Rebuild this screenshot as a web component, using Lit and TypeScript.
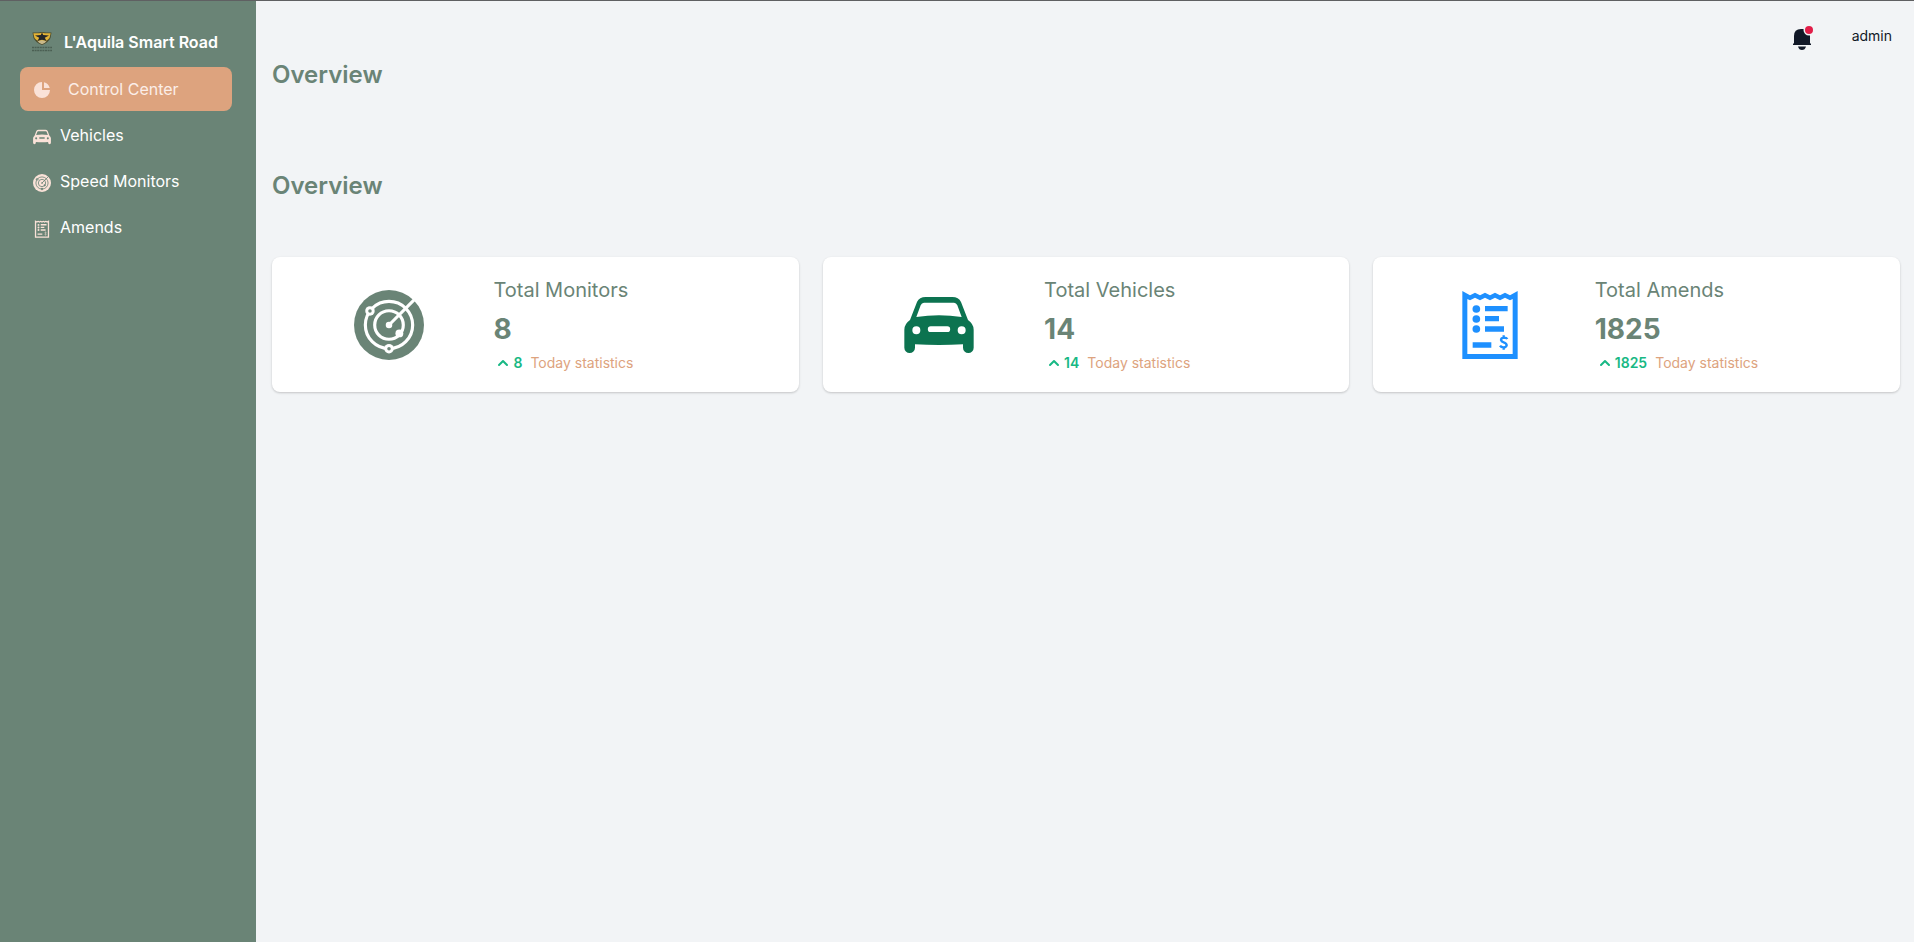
import { LitElement, html, svg, css } from "lit";
import { customElement, property } from "lit/decorators.js";

type IconName = "pie" | "car" | "radar" | "receipt";

const icons = {
  pie: svg`<svg viewBox="0 0 20 20" fill="currentColor" aria-hidden="true">
    <path d="M2 10a8 8 0 018-8v8h8a8 8 0 11-16 0z"/>
    <path d="M12 2.252A8.014 8.014 0 0117.748 8H12V2.252z"/></svg>`,
  car: svg`<svg viewBox="42 26 210 210" fill="currentColor" aria-hidden="true">
    <path fill-rule="evenodd" d="M107 47H187Q206 47 213 62L234 116Q251 128 251 145V199A16 16 0 0 1 219 199V189Q147 193 75 189V199A16 16 0 0 1 43 199V145Q43 128 60 116L81 62Q88 47 107 47ZM102 64Q95 64 92 72L79 107Q147 97 215 107L202 72Q199 64 192 64ZM79 135A12 12 0 1 0 79 159A12 12 0 1 0 79 135ZM215 135A12 12 0 1 0 215 159A12 12 0 1 0 215 135ZM122 135A8.500 8.500 0 0 0 122 152H172A8.500 8.500 0 0 0 172 135Z"/></svg>`,
  radar: svg`<svg viewBox="-35.500 -35.500 71 71" aria-hidden="true">
    <mask id="radar-cut" maskUnits="userSpaceOnUse" x="-36" y="-36" width="72" height="72">
      <circle r="35.500" fill="#fff"/>
      <g fill="none" stroke="#000" stroke-width="3.200">
        <circle r="24"/><circle r="14.500"/><path d="M0 0L28 -28"/>
      </g>
      <circle r="3.300"/><circle cx="10.500" cy="8.500" r="4"/>
      <circle cx="-19.300" cy="-14.300" r="4.800"/><circle cy="24" r="4.800"/>
      <circle cx="-19.300" cy="-14.300" r="1.800" fill="#fff"/><circle cy="24" r="1.800" fill="#fff"/>
    </mask>
    <rect x="-36" y="-36" width="72" height="72" fill="currentColor" mask="url(#radar-cut)"/></svg>`,
  receipt: svg`<svg viewBox="45 30 210 210" fill="currentColor" aria-hidden="true">
    <path fill-rule="evenodd" d="M67 33L90 46L105 38L120 46L135 38L150 46L165 38L180 46L195 38L210 46L233 33V237H67ZM82 57V222H218V57L210 61L195 53L180 61L165 53L150 61L135 53L120 61L105 53L90 61Z"/>
    <circle cx="109" cy="87" r="11.500"/><circle cx="109" cy="117" r="11.500"/><circle cx="109" cy="147" r="11.500"/>
    <path d="M135 78h68v16h-68zM135 108h42v16h-42zM135 139h57v16h-57zM98 187h56v16H98z"/>
    <path d="M202 177Q200 173 191 173Q183 174 183 180Q184 185 191 187Q200 190 200 196Q198 202 191 202Q183 202 180 197M191 166V174M191 201V209" fill="none" stroke="currentColor" stroke-width="7"/></svg>`,
};

const crest = svg`<svg viewBox="0 0 20 20" aria-hidden="true">
  <path d="M0.500 0.500H6L10 0L14 0.500H19.500L18.500 6Q16 11 10 13Q4 11 1.500 6Z" fill="#4a4a2c"/>
  <path d="M1.300 1.300H7L10 0.800L13 1.300H18.700L17.500 6Q15 9.500 10 9.500Q5 9.500 2.500 6Z" fill="#e3b437"/>
  <path d="M10 0.500L11.200 3L17 3.600L12.800 5.800L14.500 9L10 7.800L5.500 9L7.200 5.800L3 3.600L8.800 3Z" fill="#24272a"/>
  <path d="M5.500 9.300L10 8.300L14.500 9.300Q13 11.500 10 12.300Q7 11.500 5.500 9.300Z" fill="#c9b98a"/>
  <path d="M0 15.500H20M0 18.500H20" stroke="#4b5f53" stroke-width="1.500" stroke-dasharray="2 .6"/></svg>`;

@customElement("stat-card")
export class StatCard extends LitElement {
  @property() icon: IconName = "car";
  @property() label = "";
  @property() value = "";

  static styles = css`
    :host {
      display: grid;
      grid-template-columns: 5fr 7fr;
      align-items: center;
      padding: 20px 12px;
      background: #fff;
      border-radius: 8px;
      box-shadow: 0 1px 3px rgba(0, 0, 0, 0.1), 0 1px 2px rgba(0, 0, 0, 0.1);
      color: #6a8476;
    }
    .figure { display: flex; justify-content: center; }
    .figure svg { width: 70px; height: 70px; }
    .car { color: #0c7350; }
    .receipt { color: #1e90ff; }
    .label { margin: 0; font-size: 20px; line-height: 26px; font-weight: 400; }
    .value { margin: 9px 0 7px; font-size: 28px; line-height: 35px; font-weight: 700; }
    .today { display: flex; align-items: center; font-size: 14px; line-height: 18px; color: #dda37e; }
    .arrow { width: 20px; height: 20px; margin: -1px 0; color: #18b884; }
    .count { margin-right: 8px; font-weight: 600; color: #18b884; }
  `;

  render() {
    return html`
      <div class="figure ${this.icon}">${icons[this.icon]}</div>
      <div>
        <h3 class="label">${this.label}</h3>
        <div class="value">${this.value}</div>
        <div class="today">
          <svg class="arrow" viewBox="0 0 20 20" fill="currentColor" aria-hidden="true">
            <path fill-rule="evenodd" d="M14.707 12.707a1 1 0 01-1.414 0L10 9.414l-3.293 3.293a1 1 0 01-1.414-1.414l4-4a1 1 0 011.414 0l4 4a1 1 0 010 1.414z" clip-rule="evenodd"/>
          </svg>
          <span class="count">${this.value}</span>
          <span>Today statistics</span>
        </div>
      </div>
    `;
  }
}

@customElement("app-root")
export class AppRoot extends LitElement {
  private links: { icon: IconName; text: string }[] = [
    { icon: "car", text: "Vehicles" },
    { icon: "radar", text: "Speed Monitors" },
    { icon: "receipt", text: "Amends" },
  ];

  private stats: { icon: IconName; label: string; value: string }[] = [
    { icon: "radar", label: "Total Monitors", value: "8" },
    { icon: "car", label: "Total Vehicles", value: "14" },
    { icon: "receipt", label: "Total Amends", value: "1825" },
  ];

  static styles = css`
    :host {
      display: flex;
      box-sizing: border-box;
      min-height: 100vh;
      border-top: 1px solid #5f6062;
      background: #f2f4f6;
      color: #111827;
      font: 16px/24px Inter, "Liberation Sans", sans-serif;
    }
    .sidebar {
      box-sizing: border-box;
      flex: 0 0 256px;
      padding: 18px 24px 16px 20px;
      background: #6a8476;
    }
    .menu { display: flex; flex-direction: column; gap: 2px; }
    .link {
      display: flex;
      align-items: center;
      height: 44px;
      padding: 0 12px;
      gap: 8px;
      border-radius: 8px;
      color: #fff;
      text-decoration: none;
    }
    .link svg { width: 20px; height: 18px; color: #fae2d8; margin-top: 4px; }
    .link.brand { height: 46px; gap: 12px; font-weight: 600; }
    .link.brand svg { height: 20px; margin: 0; }
    .link.active { gap: 16px; background: #dda37e; color: #fbeee8; }
    .link.active svg { height: 20px; margin-top: 2px; }
    .content { flex: 1; min-width: 0; padding: 16px 14px 16px 16px; }
    .topbar { display: flex; justify-content: flex-end; align-items: center; gap: 38px; height: 38px; }
    .topbar button {
      display: flex;
      padding: 0;
      border: 0;
      background: none;
      color: inherit;
      font: inherit;
      font-size: 14px;
    }
    .bell svg { width: 24px; height: 28px; }
    .topbar .user { margin-right: 8px; }
    .title { margin: 0; font-size: 24px; line-height: 32px; font-weight: 600; color: #6a8476; }
    .first { margin: 4px 0 79px; }
    .cards { display: grid; grid-template-columns: repeat(3, 1fr); gap: 24px; margin-top: 55px; }
    @media (max-width: 1100px) {
      .cards { grid-template-columns: 1fr; }
    }
  `;

  render() {
    return html`
      <aside class="sidebar">
        <nav class="menu">
          <a class="link brand" href="#home">${crest}<span>L'Aquila Smart Road</span></a>
          <a class="link active" href="#control" aria-current="page">${icons.pie}<span>Control Center</span></a>
          ${this.links.map((l) => html`<a class="link" href="#${l.icon}">${icons[l.icon]}<span>${l.text}</span></a>`)}
        </nav>
      </aside>
      <main class="content">
        <header class="topbar">
          <button class="bell" type="button" aria-label="Notifications">
            <svg viewBox="0 0 24 28" aria-hidden="true">
              <path d="M4 21V14Q4 7 11 7H13Q20 7 20 14V21L21 22V23H3V22ZM8 24.500H16Q15 28 12 28Q9 28 8 24.500Z" fill="#111827"/>
              <circle cx="19" cy="8" r="5.500" fill="#f2f4f6"/>
              <circle cx="19" cy="8" r="4" fill="#e11d48"/>
            </svg>
          </button>
          <button class="user" type="button">admin</button>
        </header>
        <h2 class="title first">Overview</h2>
        <h2 class="title">Overview</h2>
        <section class="cards">
          ${this.stats.map((s) => html`<stat-card .icon=${s.icon} .label=${s.label} .value=${s.value}></stat-card>`)}
        </section>
      </main>
    `;
  }
}
